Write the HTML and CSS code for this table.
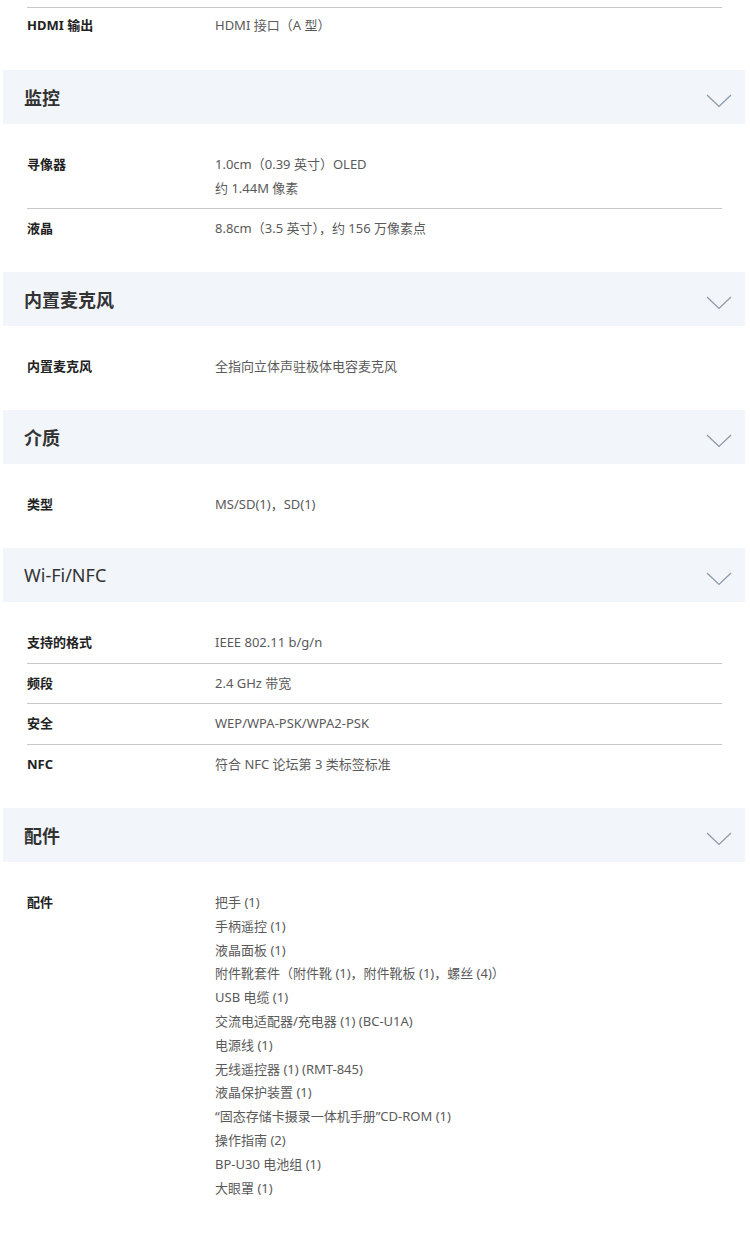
FILE: index.html
```html
<!DOCTYPE html>
<html lang="zh-CN">
<head>
    <meta charset="UTF-8">
    <meta name="viewport" content="width=device-width, initial-scale=1.0">
    <title>规格</title>
    <link rel="stylesheet" href="styles.css">
</head>
<body>

<div class="spec-body tail">
    <div class="row">
        <div class="label">HDMI 输出</div>
        <div class="value">HDMI 接口（A 型）</div>
    </div>
</div>

<div class="section">
    <div class="section-head">
        <h3>监控</h3>
        <svg class="chevron" width="26" height="14" viewBox="0 0 26 14"><polyline points="1,1 13,12.5 25,1" fill="none" stroke="#8c97a8" stroke-width="1.2"/></svg>
    </div>
    <div class="spec-body">
        <div class="row">
            <div class="label">寻像器</div>
            <div class="value">1.0cm（0.39 英寸）OLED<br>约 1.44M 像素</div>
        </div>
        <div class="row">
            <div class="label">液晶</div>
            <div class="value">8.8cm（3.5 英寸），约 156 万像素点</div>
        </div>
    </div>
</div>

<div class="section">
    <div class="section-head">
        <h3>内置麦克风</h3>
        <svg class="chevron" width="26" height="14" viewBox="0 0 26 14"><polyline points="1,1 13,12.5 25,1" fill="none" stroke="#8c97a8" stroke-width="1.2"/></svg>
    </div>
    <div class="spec-body">
        <div class="row">
            <div class="label">内置麦克风</div>
            <div class="value">全指向立体声驻极体电容麦克风</div>
        </div>
    </div>
</div>

<div class="section">
    <div class="section-head">
        <h3>介质</h3>
        <svg class="chevron" width="26" height="14" viewBox="0 0 26 14"><polyline points="1,1 13,12.5 25,1" fill="none" stroke="#8c97a8" stroke-width="1.2"/></svg>
    </div>
    <div class="spec-body">
        <div class="row">
            <div class="label">类型</div>
            <div class="value">MS/SD(1)，SD(1)</div>
        </div>
    </div>
</div>

<div class="section">
    <div class="section-head">
        <h3 class="latin">Wi-Fi/NFC</h3>
        <svg class="chevron" width="26" height="14" viewBox="0 0 26 14"><polyline points="1,1 13,12.5 25,1" fill="none" stroke="#8c97a8" stroke-width="1.2"/></svg>
    </div>
    <div class="spec-body">
        <div class="row">
            <div class="label">支持的格式</div>
            <div class="value">IEEE 802.11 b/g/n</div>
        </div>
        <div class="row">
            <div class="label">频段</div>
            <div class="value">2.4 GHz 带宽</div>
        </div>
        <div class="row">
            <div class="label">安全</div>
            <div class="value">WEP/WPA-PSK/WPA2-PSK</div>
        </div>
        <div class="row">
            <div class="label">NFC</div>
            <div class="value">符合 NFC 论坛第 3 类标签标准</div>
        </div>
    </div>
</div>

<div class="section">
    <div class="section-head">
        <h3>配件</h3>
        <svg class="chevron" width="26" height="14" viewBox="0 0 26 14"><polyline points="1,1 13,12.5 25,1" fill="none" stroke="#8c97a8" stroke-width="1.2"/></svg>
    </div>
    <div class="spec-body">
        <div class="row">
            <div class="label">配件</div>
            <div class="value">
                把手 (1)<br>
                手柄遥控 (1)<br>
                液晶面板 (1)<br>
                附件靴套件（附件靴 (1)，附件靴板 (1)，螺丝 (4)）<br>
                USB 电缆 (1)<br>
                交流电适配器/充电器 (1) (BC-U1A)<br>
                电源线 (1)<br>
                无线遥控器 (1) (RMT-845)<br>
                液晶保护装置 (1)<br>
                “固态存储卡摄录一体机手册”CD-ROM (1)<br>
                操作指南 (2)<br>
                BP-U30 电池组 (1)<br>
                大眼罩 (1)
            </div>
        </div>
    </div>
</div>

</body>
</html>
```

FILE: styles.css
```css
body {
    margin: 0;
    padding: 0 5px 0 3px;
    background: #fff;
    font-family: "Noto Sans", "Noto Sans CJK SC", sans-serif;
    font-size: 13px;
    color: #222;
}
.spec-body {
    padding: 21px 23px 23px 24px;
}
.spec-body.tail {
    padding-top: 0;
    padding-bottom: 24px;
}
.tail .row {
    border-top: 1px solid #c8c8c8;
    margin-top: 7px;
    padding-top: 6px;
}
.row {
    display: flex;
    padding: 8px 0;
    line-height: 23.8px;
    border-bottom: 1px solid #c8c8c8;
}
.row:last-child {
    border-bottom: none;
}
.label {
    width: 188px;
    flex-shrink: 0;
    font-weight: bold;
    color: #222;
}
.value {
    color: #5a5a5a;
}
.section-head {
    display: flex;
    align-items: center;
    justify-content: space-between;
    height: 54px;
    background: #f2f5fa;
    padding: 0 13px 0 21px;
}
.section-head h3 {
    margin: 0;
    font-size: 18px;
    font-weight: bold;
    color: #333;
}
.section-head h3.latin {
    font-weight: normal;
}
.chevron {
    margin-top: 8px;
}
```
